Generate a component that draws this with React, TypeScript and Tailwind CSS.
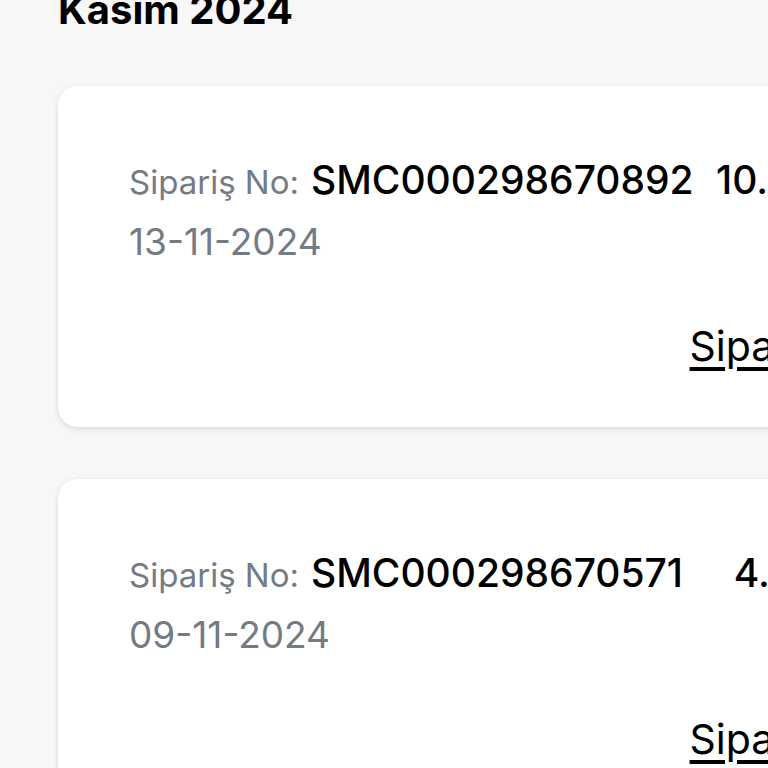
const orders = [
  { no: "SMC000298670892", date: "13-11-2024", amount: "10.499,90 TL" },
  { no: "SMC000298670571", date: "09-11-2024", amount: "4.299,90 TL" },
];

function OrderCard({ no, date, amount }: { no: string; date: string; amount: string }) {
  return (
    <div className="w-[974px] shrink-0 rounded-[20px] bg-white px-[71px] pt-[64px] pb-[51px] shadow-[0_2px_6px_rgba(0,0,0,0.12)]">
      <div className="flex items-baseline justify-between leading-[60px]">
        <div className="flex items-baseline gap-[12px]">
          <span className="text-[33px] text-[#737b84]">Sipariş No:</span>
          <span className="text-[39px] font-medium text-black">{no}</span>
        </div>
        <span className="text-[39px] font-medium text-black">{amount}</span>
      </div>
      <div className="text-[37px] leading-[60px] text-[#737b84]">{date}</div>
      <div className="mt-[44px] flex justify-end pr-[5px]">
        <a href="#" className="text-[41px] leading-[60px] text-black underline underline-offset-[6px]">
          Sipariş Detayı
        </a>
      </div>
    </div>
  );
}

export default function App() {
  return (
    <main
      className="h-[768px] w-[768px] overflow-hidden bg-[#f7f7f7] pl-[58px]"
      style={{ fontFamily: "Inter, 'Noto Sans', sans-serif" }}
    >
      <h1 className="-mt-[10px] text-[40px] font-bold leading-none text-black">Kasım 2024</h1>
      <div className="mt-[56px] flex flex-col gap-[52px]">
        {orders.map((o) => (
          <OrderCard key={o.no} {...o} />
        ))}
      </div>
    </main>
  );
}
